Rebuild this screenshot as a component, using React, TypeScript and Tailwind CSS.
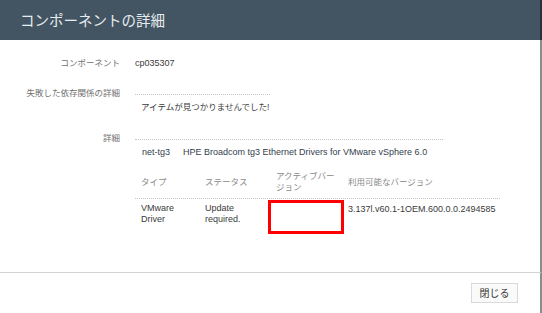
export default function App() {
  const font = { fontFamily: '"Liberation Sans", "Noto Sans CJK JP", Arial, sans-serif' };
  const jp = "text-[8.5px]";
  return (
    <div className="w-[542px] h-[313px] bg-white flex flex-col overflow-hidden" style={font}>
      <div className="h-[40px] shrink-0 flex items-center pl-[20px] bg-[#435563] border-r-2 border-[#26313a] text-[#e8ecef] text-[14.5px]" style={{ fontFamily: '"Noto Sans CJK JP", sans-serif' }}>
        コンポーネントの詳細
      </div>
      <div className="h-[232px] shrink-0 flex flex-col pt-[17px] border-r-2 border-[#8c8c8c] text-[#3b3b3b]">
        <div className="flex items-center h-[12px]">
          <div className={`w-[120px] text-right text-[#707070] leading-[12px] ${jp}`}>コンポーネント</div>
          <div className="ml-[15px] text-[9px] leading-[12px]">cp035307</div>
        </div>
        <div className="flex items-start mt-[18px]">
          <div className={`w-[120px] text-right text-[#707070] leading-[12px] ${jp}`}>失敗した依存関係の詳細</div>
          <div className="ml-[15px] mt-[7px] w-[135px] border-t border-dotted border-[#c4c4c4] pt-[6px] pl-[6px]">
            <div className={`leading-[12px] ${jp}`}>アイテムが見つかりませんでした!</div>
          </div>
        </div>
        <div className="flex items-start mt-[19px]">
          <div className={`w-[120px] text-right text-[#707070] leading-[12px] ${jp}`}>詳細</div>
          <div className="ml-[15px] mt-[7px] w-[365px]">
            <div className="w-[308px] border-t border-dotted border-[#c4c4c4] pt-[6px] pl-[7px] flex gap-[13px] text-[9px] leading-[12px] text-[#34414e]">
              <span>net-tg3</span>
              <span>HPE Broadcom tg3 Ethernet Drivers for VMware vSphere 6.0</span>
            </div>
            <div className={`mt-[13px] grid grid-cols-[64px_71px_72px_158px] items-center border-b border-dotted border-[#c4c4c4] pb-[5px] text-[#8a8a8a] leading-[11px] ${jp}`}>
              <div className="pl-[6px]">タイプ</div>
              <div className="pl-[6px]">ステータス</div>
              <div className="pl-[6px]">アクティブバー<br />ジョン</div>
              <div className="pl-[6px]">利用可能なバージョン</div>
            </div>
            <div className="grid grid-cols-[64px_71px_72px_158px] items-start text-[9px] leading-[11px]">
              <div className="pl-[6px] pt-[4px]">VMware<br />Driver</div>
              <div className="pl-[6px] pt-[4px]">Update<br />required.</div>
              <div className="relative h-[36px]">
                <div className="absolute left-[-2px] right-[-2px] top-[1px] h-[34px] border-[3px] border-[#ff0000]" />
              </div>
              <div className="pl-[6px] pt-[5px]">3.137l.v60.1-1OEM.600.0.0.2494585</div>
            </div>
          </div>
        </div>
      </div>
      <div className="h-[41px] shrink-0 border-t border-[#d2d2d2] border-r-2 border-r-[#8c8c8c] flex justify-end items-start pt-[10px] pr-[22px]">
        <button className="w-[47px] h-[20px] border border-[#d9d9d9] bg-[#fafafa] text-[10px] text-[#333] leading-[18px]" style={{ fontFamily: '"Noto Sans CJK JP", sans-serif' }}>
          閉じる
        </button>
      </div>
    </div>
  );
}
